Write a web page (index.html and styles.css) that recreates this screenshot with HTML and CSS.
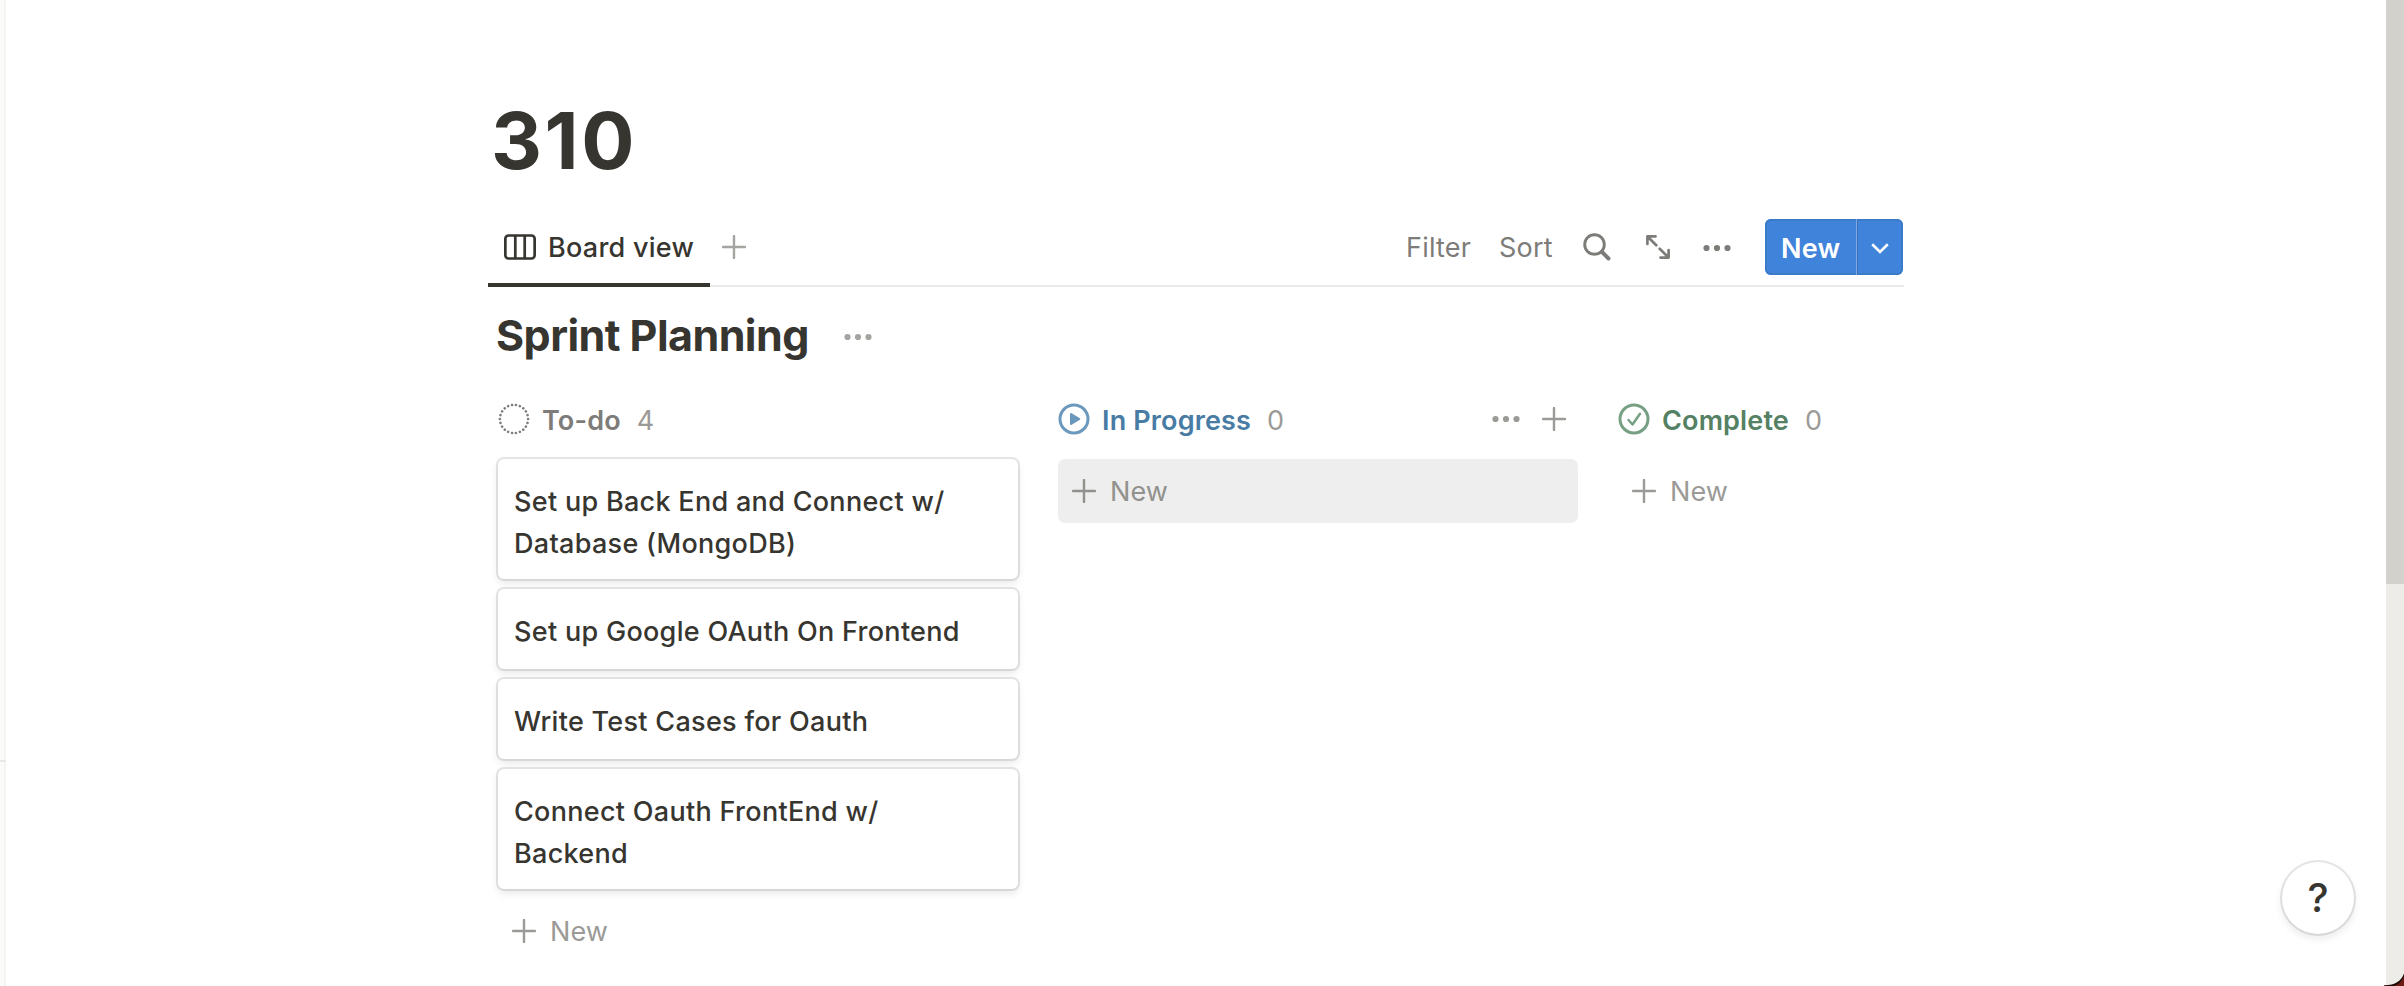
FILE: index.html
```html
<!DOCTYPE html>
<html lang="en">
<head>
<meta charset="utf-8">
<title>310</title>
<link rel="stylesheet" href="styles.css">
</head>
<body>
<svg class="defs" aria-hidden="true">
  <symbol id="plus" viewBox="0 0 24 24"><path d="M12 1v22M1 12h22" fill="none" stroke="currentColor" stroke-width="2.4" stroke-linecap="round"/></symbol>
  <symbol id="dots" viewBox="0 0 28 8"><g fill="currentColor"><circle cx="3.500" cy="4" r="3.100"/><circle cx="14" cy="4" r="3.100"/><circle cx="24.500" cy="4" r="3.100"/></g></symbol>
</svg>
<div class="app">
  <aside class="sidebar"><div class="sidebar-rule"></div></aside>
  <main class="page">
    <h1 class="title">310</h1>
    <div class="toolbar">
      <div class="tab">
        <svg class="icon-board" viewBox="0 0 32 26" fill="none" stroke="currentColor" stroke-width="2.7"><rect x="1.350" y="1.500" width="29.300" height="23" rx="3.200"/><path d="M11.300 1.500v23M20.700 1.500v23"/></svg>
        <span class="tab-label">Board view</span>
      </div>
      <svg class="plus add-view"><use href="#plus"/></svg>
      <div class="actions">
        <span class="filter">Filter</span>
        <span class="sort">Sort</span>
        <svg class="icon-search" viewBox="0 0 28 28" fill="none" stroke="currentColor"><circle cx="11.500" cy="11.500" r="9.800" stroke-width="2.900"/><path d="M19 19l6.500 6.500" stroke-width="3.900" stroke-linecap="round"/></svg>
        <svg class="icon-expand" viewBox="0 0 24 24" fill="none" stroke="currentColor" stroke-width="2.7" stroke-linecap="round" stroke-linejoin="round"><path d="M1.400 9V1.400H9.500M1.500 1.500l8.800 8.800M22.600 15v7.600H14.500M22.500 22.500l-8.800-8.800"/></svg>
        <svg class="dots menu-dots"><use href="#dots"/></svg>
        <div class="new-button">
          <span class="new-main">New</span>
          <span class="new-more"><svg class="chevron" viewBox="0 0 18 11" fill="none" stroke="currentColor" stroke-width="2.6"><path d="M1.200 1.300L9 9l7.800-7.700"/></svg></span>
        </div>
      </div>
    </div>
    <div class="heading">
      <h2 class="subtitle">Sprint Planning</h2>
      <svg class="dots heading-dots"><use href="#dots"/></svg>
    </div>
    <div class="board">
      <section class="column">
        <header class="column-head todo">
          <svg class="status" viewBox="0 0 32 32"><circle cx="16" cy="16" r="14.1" fill="none" stroke="currentColor" stroke-width="2.600" stroke-linecap="round" pathLength="220" stroke-dasharray="0.01 9.990"/></svg>
          <span class="name">To-do</span><span class="count">4</span>
        </header>
        <div class="card">Set up Back End and Connect w/<br>Database (MongoDB)</div>
        <div class="card">Set up Google OAuth On Frontend</div>
        <div class="card">Write Test Cases for Oauth</div>
        <div class="card">Connect Oauth FrontEnd w/<br>Backend</div>
        <div class="new-row"><svg class="plus"><use href="#plus"/></svg><span class="new-label">New</span></div>
      </section>
      <section class="column">
        <header class="column-head progress">
          <svg class="status" viewBox="0 0 32 32"><circle cx="16" cy="16" r="14" fill="none" stroke="currentColor" stroke-width="3"/><path d="M12.800 10.800v10.400l8.700-5.200z" fill="currentColor" stroke="currentColor" stroke-width="1.600" stroke-linejoin="round"/></svg>
          <span class="name">In Progress</span><span class="count">0</span>
          <svg class="dots column-dots"><use href="#dots"/></svg>
          <svg class="plus column-plus"><use href="#plus"/></svg>
        </header>
        <div class="new-row hovered"><svg class="plus"><use href="#plus"/></svg><span class="new-label">New</span></div>
      </section>
      <section class="column last">
        <header class="column-head complete">
          <svg class="status" viewBox="0 0 32 32" fill="none" stroke="currentColor"><circle cx="16" cy="16" r="14" stroke-width="3"/><path d="M10.500 17l4 4.500 7.500-10.800" stroke-width="2.500" stroke-linecap="round" stroke-linejoin="round"/></svg>
          <span class="name">Complete</span><span class="count">0</span>
        </header>
        <div class="new-row"><svg class="plus"><use href="#plus"/></svg><span class="new-label">New</span></div>
      </section>
    </div>
  </main>
  <div class="scrollbar"><div class="thumb"></div></div>
  <div class="help">?</div>
  <svg class="corner" viewBox="0 0 20 20"><path d="M20 7.500C17 15 12 19 0 19.300V20h20z" fill="#1c0805"/><path d="M20 10.500C17 16 14 19 9 20h11z" fill="#6a1c14"/></svg>
</div>
</body>
</html>
```
FILE: styles.css
```css
* { box-sizing: border-box; }
body {
  margin: 0;
  background: #fff;
  color: #37352f;
  font-family: Inter, "Liberation Sans", sans-serif;
  font-size: 27px;
  line-height: 42px;
}
svg { display: block; flex: none; }
.defs { position: absolute; width: 0; height: 0; }
.app { position: relative; display: flex; width: 2404px; height: 986px; overflow: hidden; }

.sidebar { width: 6px; padding-top: 760px; background: #fbfbfa; border-right: 2px solid #f4f4f3; }
.sidebar-rule { width: 6px; height: 2px; background: #e8e8e7; }

.page { flex: 1; padding: 100px 0 0 492px; }
.title { margin: 0 0 29px -7px; font-size: 79px; line-height: 80px; font-weight: 700; letter-spacing: 2.6px; }

.toolbar {
  display: flex;
  align-items: center;
  width: 1416px;
  height: 78px;
  margin-left: -10px;
  border-bottom: 2px solid #e9e9e7;
}
.tab {
  display: flex;
  align-items: center;
  align-self: flex-start;
  width: 222px;
  height: 78px;
  padding: 2px 0 0 16px;
  border-bottom: 4px solid #37352f;
}
.icon-board { width: 32px; height: 26px; margin-right: 12px; }
.tab-label { padding-top: 2px; font-weight: 500; letter-spacing: .25px; white-space: nowrap; }
.plus { width: 24px; height: 24px; color: #9b9a97; }
.dots { width: 28px; height: 8px; }
.add-view { margin-left: 12px; color: #a5a4a0; }
.actions { display: flex; align-items: center; margin-left: auto; padding-right: 1px; color: #7d7c78; }
.filter { width: 93px; padding-top: 1px; letter-spacing: .2px; }
.sort { width: 84px; padding-top: 1px; letter-spacing: .2px; }
.icon-search { width: 28px; height: 28px; }
.icon-expand { width: 24px; height: 24px; margin-left: 35px; }
.menu-dots { margin: 2px 34px 0 33px; }
.new-button {
  display: flex;
  width: 138px;
  height: 56px;
  border-radius: 6px;
  color: #fff;
  background: #4083da;
  box-shadow: inset 0 0 0 2px #3b79c9;
}
.new-main { width: 92px; padding-left: 16px; line-height: 59px; font-weight: 600; letter-spacing: .2px; border-right: 1px solid #7da8e2; }
.new-more { display: flex; flex: 1; align-items: center; justify-content: center; padding: 3px 1px 0 0; border-left: 1px solid #3971ba; }
.chevron { width: 18px; height: 11px; }

.heading { display: flex; align-items: center; margin-top: 20px; height: 56px; }
.subtitle { margin: 0 0 0 -2px; width: 348px; font-size: 43px; line-height: 56px; font-weight: 700; letter-spacing: -.55px; white-space: nowrap; }
.heading-dots { margin-top: 4px; color: #a5a4a0; }

.board { display: flex; gap: 40px; margin-top: 36px; }
.column { width: 520px; }
.column.last { width: 286px; }
.column-head { display: flex; align-items: center; height: 40px; margin-bottom: 20px; }
.status { width: 32px; height: 32px; }
.name { margin: 3px 0 0 12px; font-weight: 600; letter-spacing: .15px; white-space: nowrap; }
.count { margin: 3px 0 0 16px; color: #9b9a97; }
.todo { color: #7d7c78; }
.progress .name { color: #487ca5; }
.progress .status { color: #6b98bd; }
.complete .name { color: #548164; }
.complete .status { color: #779f84; }
.progress .column-dots { margin-left: auto; color: #9b9a97; }
.column-plus { margin: 0 12px 0 22px; }

.card {
  min-height: 80px;
  margin-bottom: 10px;
  padding: 22px 16px 14px;
  border-radius: 6px;
  background: #fff;
  box-shadow: 0 0 0 2px rgba(15, 15, 15, .1), 0 4px 8px rgba(15, 15, 15, .1);
  font-weight: 500;
  letter-spacing: .3px;
  white-space: nowrap;
}
.new-row { display: flex; align-items: center; height: 64px; padding-left: 14px; border-radius: 7px; color: #9b9a97; }
.new-label { margin: 1px 0 0 14px; letter-spacing: .1px; }
.hovered { background: #eee; color: #91918d; }
.hovered .plus { color: #91918d; }

.scrollbar { width: 18px; background: #edece9; }
.thumb { height: 584px; background: #d3d1cb; }
.help {
  position: absolute;
  left: 2282px;
  top: 862px;
  width: 72px;
  height: 72px;
  border-radius: 50%;
  background: #fff;
  box-shadow: 0 0 0 2px rgba(15, 15, 15, .1), 0 4px 8px rgba(15, 15, 15, .1);
  font-size: 40px;
  font-weight: 500;
  line-height: 72px;
  text-align: center;
}
.corner { position: absolute; right: 0; bottom: 0; width: 20px; height: 20px; }
```
